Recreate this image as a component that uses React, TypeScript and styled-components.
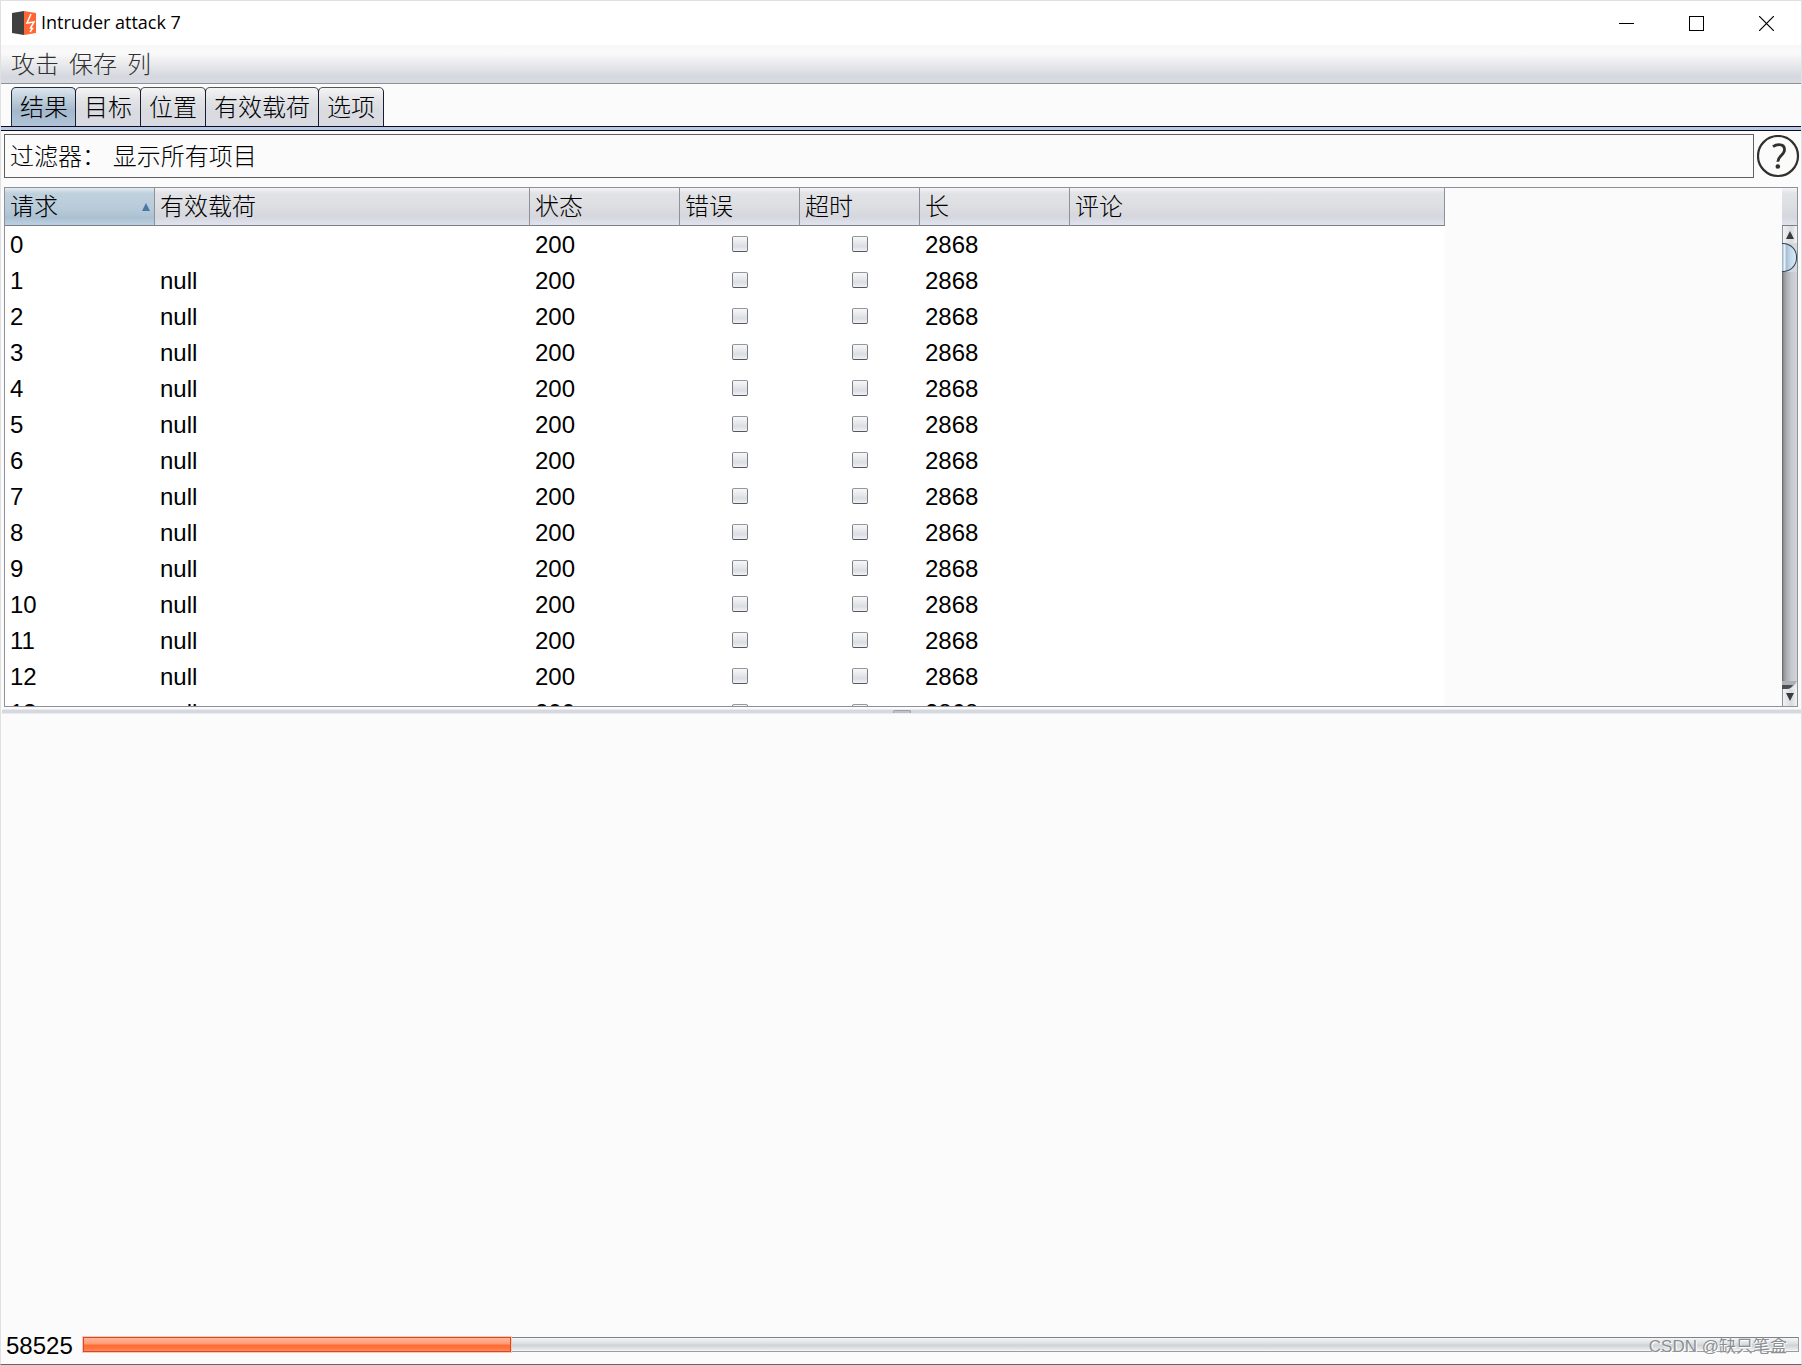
import React, { useState } from "react";
import styled, { createGlobalStyle } from "styled-components";

const uiFont = `"Liberation Sans", "Noto Sans CJK SC", sans-serif`;
const titleFont = `"Open Sans", "Noto Sans", sans-serif`;
const frameLine = "#8e9199";
const surface = "#fbfbfb";
const headerFill =
  "linear-gradient(#f5f5f7 0, #e2e3e6 14%, #dddee2 50%, #d6d7de 78%, #dfe3ee 100%)";

const GlobalStyle = createGlobalStyle`
  *, *::before, *::after { box-sizing: border-box; }
  body { margin: 0; background: ${surface}; }
  button { font: inherit; color: inherit; border: 0; background: none; padding: 0; margin: 0; }
`;

const Window = styled.div`
  position: relative;
  display: flex;
  flex-direction: column;
  height: 100vh;
  border: 1px solid #e0e0e0;
  border-bottom-color: #666;
  background: ${surface};
  color: #000;
  font: 300 24px/36px ${uiFont};
`;

const TitleBar = styled.header`
  display: flex;
  align-items: center;
  height: 44px;
  padding-left: 11px;
  background: #fff;
`;

const Title = styled.h1`
  flex: 1;
  margin: 0 0 0 4px;
  padding-bottom: 2px;
  font: 400 18px/24px ${titleFont};
`;

const WindowButton = styled.button`
  display: grid;
  place-items: center;
  width: 70px;
  height: 44px;
`;

const MenuBar = styled.nav`
  display: flex;
  gap: 10px;
  height: 39px;
  padding: 2px 10px 0;
  border-bottom: 1px solid ${frameLine};
  background: linear-gradient(#f7f7f7 0, #fafafa 20%, #e9eaed 50%, #d5d8de 82%, #d7dadf 100%);
  color: #303030;
`;

const TabStrip = styled.div`
  display: flex;
  height: 42px;
  padding: 3px 10px 0;
`;

const Tab = styled.button<{ $selected: boolean }>`
  height: 39px;
  padding: ${(p) => (p.$selected ? "1px 7px 0 8px" : "1px 8px 0")};
  border: 1px solid #55565c;
  border-color: ${(p) => (p.$selected ? "#22303f" : "#55565c #1b1b33 #1b1b33")};
  border-bottom: 0;
  border-radius: 5px 5px 0 0;
  margin-right: -1px;
  background: ${(p) =>
    p.$selected
      ? "linear-gradient(#dce6ee 0, #bfcedb 30%, #a3b8cb 60%, #b2c5d8 100%)"
      : "linear-gradient(#f4f4f5 0, #e3e4e7 30%, #dadbe0 60%, #d9dbe2 100%)"};
`;

const TabRule = styled.div`
  flex: none;
  height: 5px;
  border: 1px solid #0b0b28;
  border-width: 1px 0;
  background: #b8c9e0;
`;

const SplitPane = styled.main`
  flex: 1;
  min-height: 0;
  display: grid;
  grid-template-rows: minmax(0, 486fr) 5px minmax(0, 514fr);
`;

const ResultsPane = styled.section`
  display: flex;
  flex-direction: column;
  gap: 9px;
  min-height: 0;
  padding: 3px 1px 2px 3px;
`;

const FilterRow = styled.div`
  display: flex;
  align-items: center;
  gap: 3px;
`;

const FilterButton = styled.button`
  flex: 1;
  height: 44px;
  padding: 2px 5px 0;
  border: 1px solid #606060;
  text-align: left;
  white-space: pre;
`;

const HelpButton = styled.button`
  display: grid;
  width: 43px;
  height: 43px;
`;

const TableFrame = styled.div`
  flex: 1;
  display: flex;
  min-height: 0;
  margin-right: 2px;
  border: 1px solid ${frameLine};
`;

const TableViewport = styled.div`
  flex: 1;
  min-width: 0;
  overflow: hidden;
`;

const Table = styled.table`
  table-layout: fixed;
  width: 1440px;
  border-collapse: separate;
  border-spacing: 0;
  background: #fff;
`;

const HeaderCell = styled.th<{ $sorted: boolean }>`
  height: 38px;
  padding: 0 4px 0 5px;
  border-right: 1px solid ${frameLine};
  border-bottom: 1px solid #7c7e86;
  background: ${(p) =>
    p.$sorted
      ? "linear-gradient(#e2ebf1 0, #c0d1de 14%, #b9cbd9 55%, #abc1d2 80%, #bcd0e0 100%)"
      : headerFill};
  font-weight: 300;
  line-height: 34px;
  text-align: left;
`;

const HeaderContent = styled.div`
  display: flex;
  align-items: center;
  justify-content: space-between;
`;

const Cell = styled.td<{ $center?: boolean }>`
  height: 36px;
  padding: ${(p) => (p.$center ? "0" : "2px 5px 0")};
  line-height: 34px;
`;

const CheckBox = styled.input`
  appearance: none;
  display: block;
  width: 16px;
  height: 16px;
  margin: 0 auto;
  border: 1px solid #7c7e86;
  border-top-color: #96989f;
  border-bottom-color: #55585f;
  border-radius: 2px;
  background: linear-gradient(#f7f7f8, #e3e5e8 50%, #dadde1 65%, #eff1f4);
`;

const ScrollColumn = styled.div`
  display: flex;
  flex-direction: column;
  width: 15px;
  overflow: hidden;
`;

const ScrollCorner = styled.div`
  flex: none;
  height: 38px;
  border-bottom: 1px solid #7c7e86;
  background: ${headerFill};
`;

const ScrollButton = styled.button`
  flex: none;
  display: grid;
  place-items: center;
  height: 17px;
  border-left: 1px solid ${frameLine};
  background: linear-gradient(90deg, #f0f1f3, #d9dbde 60%, #f3f4f5);
`;

const ScrollTrack = styled.div`
  flex: 1;
  background: linear-gradient(90deg, #5d5e62 0, #95969b 12%, #b2b3b8 35%, #c9cad0 65%, #d3d4da 100%);
`;

const ScrollThumb = styled.div`
  height: 29px;
  border: 1px solid #2b4258;
  border-left: 0;
  border-radius: 0 14px 14px 0;
  background: linear-gradient(90deg, #8fa9bf 0, #eaf1f7 18%, #a8c0d6 32%, #c4d9ea 60%, #d9e8f4 100%);
`;

const ThumbSlot = styled.div`
  background: #d6d8dc;
`;

const TrackEnd = styled.svg`
  display: block;
  flex: none;
  width: 15px;
  height: 8px;
  background: #ebecee;
`;

const Divider = styled.div`
  display: flex;
  justify-content: center;
  align-items: center;
  margin-left: 1px;
  border: 1px solid #eaebef;
  border-width: 1px 0;
  background: #d6d8e0;
`;

const Grip = styled.span`
  width: 18px;
  height: 3px;
  border: 1px solid #9da0a8;
  border-bottom: 0;
  border-radius: 2px 2px 0 0;
  background: #bfc1c8;
`;

const StatusBar = styled.footer`
  display: flex;
  align-items: center;
  gap: 10px;
  height: 39px;
  padding: 0 2px 0 5px;
`;

const SentCount = styled.span`
  padding-top: 2px;
`;

const ProgressTrack = styled.div`
  flex: 1;
  height: 15px;
  border: 1px solid #9b9da3;
  border-top-color: #808289;
  background: linear-gradient(#f4f5f6 0, #dfe1e3 40%, #d0d3d6 55%, #e0e2e5 80%, #f8f8f9 100%);
`;

const ProgressFill = styled.div`
  height: 15px;
  margin: -1px;
  border: 1px solid #cd4a30;
  box-shadow: 0 0 0 1px #ffc4ae;
  background: linear-gradient(#ffb79c 0, #ff9a72 45%, #ff6c34 55%, #ff7440 80%, #ff8c58 100%);
`;

const Watermark = styled.span`
  position: absolute;
  right: 14px;
  bottom: 5px;
  color: #8d8f92;
  font: 400 17px/24px ${uiFont};
  text-shadow: 1px 1px 0 #fff;
`;

const AppLogo = () => (
  <svg width="25" height="24" viewBox="0 0 25 24" aria-hidden="true">
    <path d="M0 2 12 0v24L0 22z" fill="#404040" />
    <path d="M12 0 24 2v20l-12 2z" fill="#ff6633" />
    <path
      d="M19 3 15 12l7-1-3.500 6 2 .5-2.500 3.500"
      fill="none"
      stroke="#fff"
      strokeWidth="1.500"
    />
  </svg>
);

const MinimizeIcon = () => (
  <svg width="15" height="15" viewBox="0 0 15 15" aria-hidden="true">
    <path d="M0 7.500h15" stroke="#000" />
  </svg>
);

const MaximizeIcon = () => (
  <svg width="15" height="15" viewBox="0 0 15 15" aria-hidden="true">
    <rect x=".5" y=".5" width="14" height="14" fill="none" stroke="#000" />
  </svg>
);

const CloseIcon = () => (
  <svg width="15" height="15" viewBox="0 0 15 15" aria-hidden="true">
    <path d="M0 0l15 15M15 0 0 15" stroke="#000" strokeWidth="1.200" />
  </svg>
);

const HelpIcon = () => (
  <svg width="43" height="43" viewBox="0 0 43 43" aria-hidden="true">
    <circle cx="21" cy="21" r="20" fill="none" stroke="#30302d" strokeWidth="2.200" />
    <path
      d="M16 11.700c2-1.500 4-2 6-2 3.500 0 5.500 2 5.500 5 0 5.500-6.700 6-6.700 12"
      fill="none"
      stroke="#30302d"
      strokeWidth="2.800"
    />
    <circle cx="20.800" cy="31.500" r="2.300" fill="#30302d" />
  </svg>
);

const SortIcon = () => (
  <svg width="8" height="8" viewBox="0 0 8 8" aria-hidden="true">
    <path d="M4 0l4 8H0z" fill="#4878a6" />
  </svg>
);

const ArrowIcon = ({ down }: { down?: boolean }) => (
  <svg width="8" height="8" viewBox="0 0 8 8" aria-hidden="true">
    <path d={down ? "M0 0h8L4 8z" : "M4 0l4 8H0z"} fill="#3b3b3e" />
  </svg>
);

const menus = ["攻击", "保存", "列"];
const tabs = ["结果", "目标", "位置", "有效载荷", "选项"];
const columns = [
  { name: "请求", width: 150 },
  { name: "有效载荷", width: 375 },
  { name: "状态", width: 150 },
  { name: "错误", width: 120 },
  { name: "超时", width: 120 },
  { name: "长", width: 150 },
  { name: "评论", width: 375 },
];
const requests = Array.from({ length: 14 }, (_, id) => ({
  id,
  payload: id === 0 ? "" : "null",
  status: 200,
  length: 2868,
}));
const sent = 58525;
const percent = 25;

export default function App() {
  const [active, setActive] = useState(tabs[0]);

  return (
    <Window>
      <GlobalStyle />
      <TitleBar>
        <AppLogo />
        <Title>Intruder attack 7</Title>
        <WindowButton aria-label="最小化"><MinimizeIcon /></WindowButton>
        <WindowButton aria-label="最大化"><MaximizeIcon /></WindowButton>
        <WindowButton aria-label="关闭"><CloseIcon /></WindowButton>
      </TitleBar>

      <MenuBar>
        {menus.map((name) => (
          <button key={name}>{name}</button>
        ))}
      </MenuBar>

      <TabStrip role="tablist">
        {tabs.map((name) => (
          <Tab
            key={name}
            role="tab"
            aria-selected={name === active}
            $selected={name === active}
            onClick={() => setActive(name)}
          >
            {name}
          </Tab>
        ))}
      </TabStrip>
      <TabRule />

      <SplitPane>
        <ResultsPane>
          <FilterRow>
            <FilterButton>过滤器： 显示所有项目</FilterButton>
            <HelpButton aria-label="帮助"><HelpIcon /></HelpButton>
          </FilterRow>

          <TableFrame>
            <TableViewport>
              <Table>
                <colgroup>
                  {columns.map((c) => (
                    <col key={c.name} width={c.width} />
                  ))}
                </colgroup>
                <thead>
                  <tr>
                    {columns.map((c, i) => (
                      <HeaderCell key={c.name} scope="col" $sorted={i === 0}>
                        <HeaderContent>
                          {c.name}
                          {i === 0 && <SortIcon />}
                        </HeaderContent>
                      </HeaderCell>
                    ))}
                  </tr>
                </thead>
                <tbody>
                  {requests.map((r) => (
                    <tr key={r.id}>
                      <Cell>{r.id}</Cell>
                      <Cell>{r.payload}</Cell>
                      <Cell>{r.status}</Cell>
                      <Cell $center>
                        <CheckBox type="checkbox" aria-label={`错误 ${r.id}`} />
                      </Cell>
                      <Cell $center>
                        <CheckBox type="checkbox" aria-label={`超时 ${r.id}`} />
                      </Cell>
                      <Cell>{r.length}</Cell>
                      <Cell />
                    </tr>
                  ))}
                </tbody>
              </Table>
            </TableViewport>
            <ScrollColumn>
              <ScrollCorner />
              <ScrollButton aria-label="向上滚动"><ArrowIcon /></ScrollButton>
              <ScrollTrack>
                <ThumbSlot>
                  <ScrollThumb />
                </ThumbSlot>
              </ScrollTrack>
              <TrackEnd viewBox="0 0 15 8" aria-hidden="true">
                <path d="M0 0h15C13 4 10 8 5 8H0z" fill="#aeafb4" />
                <path d="M0 4h11C9 7 7 8 5 8H0z" fill="#4c4d50" />
              </TrackEnd>
              <ScrollButton aria-label="向下滚动"><ArrowIcon down /></ScrollButton>
            </ScrollColumn>
          </TableFrame>
        </ResultsPane>
        <Divider role="separator">
          <Grip />
        </Divider>
        <section />
      </SplitPane>

      <StatusBar>
        <SentCount id="sent-count">{sent}</SentCount>
        <ProgressTrack
          role="progressbar"
          aria-labelledby="sent-count"
          aria-valuemin={0}
          aria-valuemax={100}
          aria-valuenow={percent}
        >
          <ProgressFill style={{ width: `${percent}%` }} />
        </ProgressTrack>
      </StatusBar>
      <Watermark>CSDN @缺只笔盒</Watermark>
    </Window>
  );
}
